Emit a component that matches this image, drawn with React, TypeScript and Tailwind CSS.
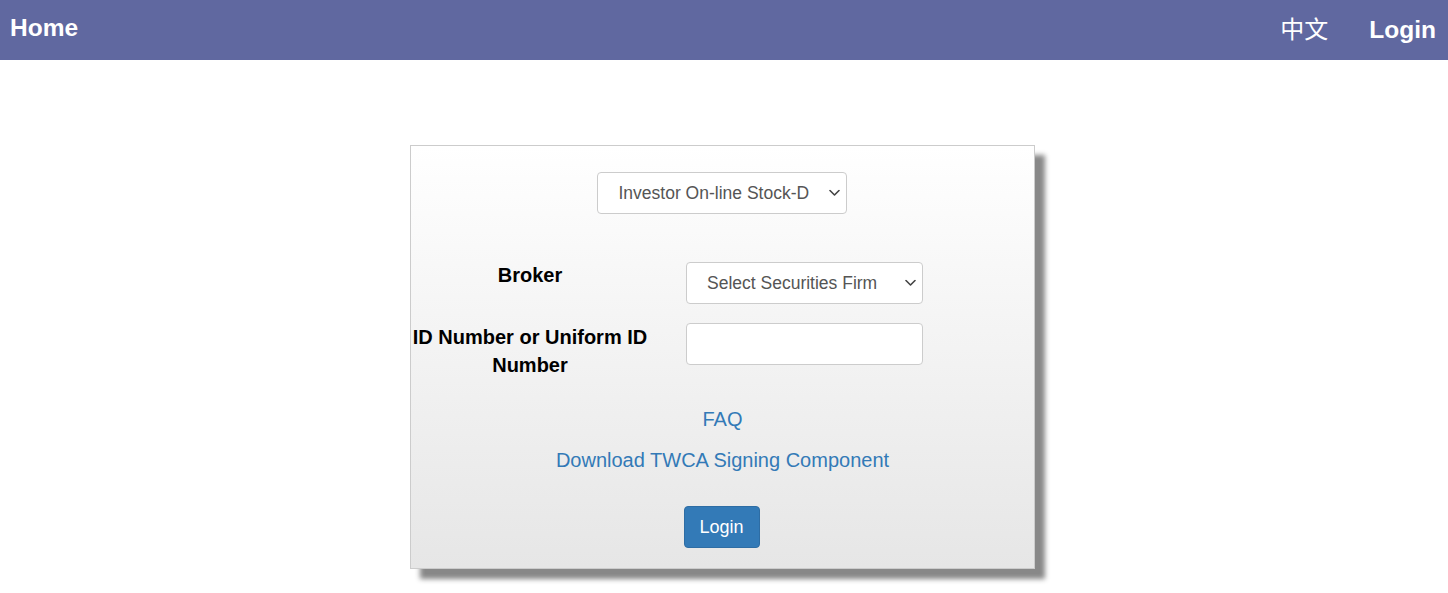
import React from "react";

function Chevron() {
  return (
    <svg
      className="pointer-events-none absolute right-[7px] top-1/2 -translate-y-1/2"
      width="11"
      height="7"
      viewBox="0 0 11 7"
      fill="none"
    >
      <polyline points="1,1 5.5,5.5 10,1" stroke="#444" strokeWidth="1.6" strokeLinecap="round" strokeLinejoin="round" />
    </svg>
  );
}

function Select({ w, pl, text, className = "" }: { w: string; pl: string; text: string; className?: string }) {
  return (
    <div className={`relative ${w} h-[42px] ${className}`}>
      <select
        className={`appearance-none w-full h-full ${pl} pr-[24px] text-[17.5px] text-[#555555] bg-white border border-[#cccccc] rounded-[4px]`}
      >
        <option>{text}</option>
      </select>
      <Chevron />
    </div>
  );
}

export default function App() {
  return (
    <div className="min-h-[593px] bg-white" style={{ fontFamily: '"Liberation Sans", Arial, "Noto Sans CJK TC", sans-serif' }}>
      <nav className="h-[60px] bg-[#6068a0] flex items-center justify-between text-white">
        <a className="pl-[10px] text-[24.5px] font-bold leading-[28px] -mt-[4px]">Home</a>
        <div className="flex items-center pr-[12px]">
          <a className="text-[24px] leading-[28px] -mt-[5px] font-['Noto_Sans_CJK_TC',sans-serif]">中文</a>
          <a className="ml-[41px] text-[24.5px] font-bold leading-[28px] -mt-[1px]">Login</a>
        </div>
      </nav>

      <div className="flex justify-center pr-[3px]">
        <div className="mt-[85px] w-[625px] border border-[#cccccc] bg-gradient-to-b from-white to-[#e6e6e6] shadow-[10px_10px_5px_#888888] flex flex-col items-center pb-[20px]">
          <Select className="mt-[26px] -translate-x-px" w="w-[250px]" pl="pl-[21px]" text="Investor On-line Stock-D" />

          <div className="mt-[47px] w-full flex items-start">
            <label className="w-[238px] text-center text-[20px] font-bold leading-[28px] text-black">Broker</label>
            <Select className="ml-[37px] mt-px" w="w-[237px]" pl="pl-[20px]" text="Select Securities Firm" />
          </div>

          <div className="mt-[19px] w-full flex items-start">
            <label className="w-[238px] text-center text-[20px] font-bold leading-[28px] text-black">ID Number or Uniform ID Number</label>
            <input className="ml-[37px] w-[237px] h-[42px] px-[12px] text-[18px] text-[#555555] bg-white border border-[#cccccc] rounded-[4px]" />
          </div>

          <a className="mt-[26px] text-[20px] leading-[28px] text-[#337ab7]">FAQ</a>
          <a className="mt-[13px] text-[20px] leading-[28px] text-[#337ab7]">Download TWCA Signing Component</a>

          <button className="mt-[32px] w-[76px] h-[42px] -translate-x-px rounded-[4px] bg-[#337ab7] border border-[#2e6da4] text-white text-[18px]">Login</button>
        </div>
      </div>
    </div>
  );
}
